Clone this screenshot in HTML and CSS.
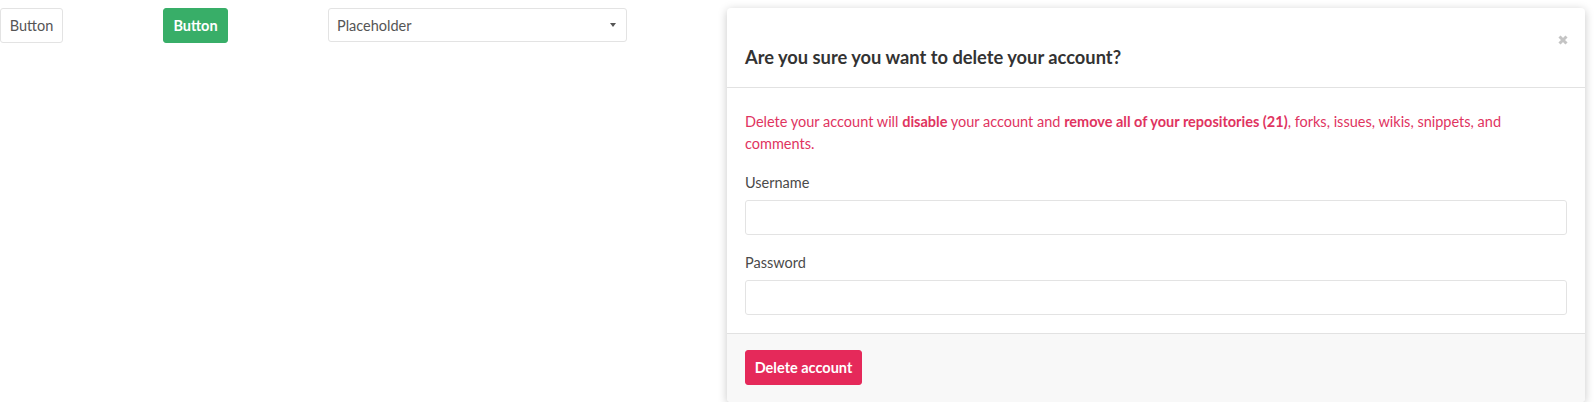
FILE: index.html
```html
<!DOCTYPE html>
<html>
<head>
<meta charset="utf-8">
<link rel="stylesheet" href="styles.css">
</head>
<body>
<div class="row">
  <button class="btn btn-default">Button</button>
  <button class="btn btn-primary">Button</button>
  <div class="select">
    <span class="select-text">Placeholder</span>
    <span class="caret"></span>
  </div>
  <div class="modal">
    <div class="modal-header">
      <h3 class="modal-title">Are you sure you want to delete your account?</h3>
      <span class="close"><svg width="10" height="10" viewBox="0 0 10 10"><path d="M1.5 1.5 L8.5 8.5 M8.5 1.5 L1.5 8.5" stroke="#c4c4c4" stroke-width="3" stroke-linecap="butt"/></svg></span>
    </div>
    <div class="modal-body">
      <p class="warning">Delete your account will <b>disable</b> your account and <b>remove all of your repositories (21)</b>, forks, issues, wikis, snippets, and comments.</p>
      <div class="field">
        <label class="label">Username</label>
        <div class="input"></div>
      </div>
      <div class="field">
        <label class="label">Password</label>
        <div class="input"></div>
      </div>
    </div>
    <div class="modal-footer">
      <button class="btn btn-danger">Delete account</button>
    </div>
  </div>
</div>
</body>
</html>
```

FILE: styles.css
```css
* { box-sizing: border-box; }
body {
  margin: 0;
  font-family: Lato, "Open Sans", sans-serif;
  color: #333;
  background: #fff;
}
.row {
  display: flex;
  align-items: flex-start;
  gap: 100px;
  padding-top: 8px;
}
.btn {
  font-family: inherit;
  font-size: 14.5px;
  height: 35px;
  padding: 0;
  border-radius: 3px;
  border: 1px solid #e3e3e3;
  background: #fff;
  color: #555;
  cursor: pointer;
}
.btn-default { width: 63px; }
.btn-primary {
  width: 65px;
  background: #38ae68;
  border-color: #38ae68;
  color: #fff;
  font-weight: bold;
}
.btn-danger {
  width: 117px;
  background: #e5295a;
  border-color: #e5295a;
  color: #fff;
  font-weight: bold;
}
.select {
  width: 299px;
  height: 34px;
  border: 1px solid #e3e3e3;
  border-radius: 3px;
  display: flex;
  align-items: center;
  justify-content: space-between;
  padding: 0 10px 0 8px;
  font-size: 14.5px;
  color: #555;
}
.caret {
  width: 0;
  height: 0;
  border-left: 3.5px solid transparent;
  border-right: 3.5px solid transparent;
  border-top: 4px solid #555;
}
.modal {
  width: 858px;
  background: #fff;
  border-radius: 4px;
  box-shadow: 0 2px 10px rgba(0,0,0,0.22);
  position: relative;
  overflow: hidden;
}
.modal-header {
  height: 80px;
  border-bottom: 1px solid #e2e2e2;
  padding: 38px 18px 0;
}
.modal-title {
  margin: 0;
  font-size: 18.3px;
  font-weight: bold;
  line-height: 22px;
  color: #333;
}
.close {
  position: absolute;
  top: 27px;
  right: 17px;
  display: block;
  line-height: 0;
}
.modal-body {
  padding: 23px 18px 18px;
  height: 245px;
}
.warning {
  margin: 0 0 17px;
  font-size: 14.5px;
  line-height: 22px;
  color: #e0345f;
}
.warning b { font-weight: bold; }
.field {
  display: flex;
  flex-direction: column;
}
.field + .field { margin-top: 17px; }
.label {
  font-size: 14.5px;
  color: #4a4a4a;
  line-height: 22px;
  margin-bottom: 6px;
}
.input {
  height: 35px;
  border: 1px solid #e3e3e3;
  border-radius: 3px;
  background: #fff;
}
.modal-footer {
  background: #f8f8f8;
  border-top: 1px solid #e2e2e2;
  padding: 16px 18px;
  height: 69px;
}
```
